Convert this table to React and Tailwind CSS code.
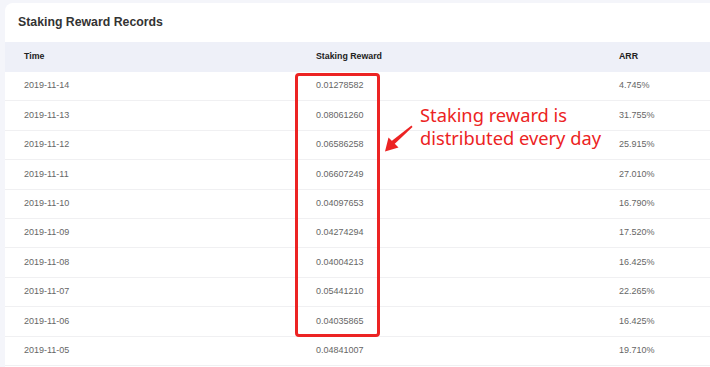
import React from "react";

const rows = [
  ["2019-11-14", "0.01278582", "4.745%"],
  ["2019-11-13", "0.08061260", "31.755%"],
  ["2019-11-12", "0.06586258", "25.915%"],
  ["2019-11-11", "0.06607249", "27.010%"],
  ["2019-11-10", "0.04097653", "16.790%"],
  ["2019-11-09", "0.04274294", "17.520%"],
  ["2019-11-08", "0.04004213", "16.425%"],
  ["2019-11-07", "0.05441210", "22.265%"],
  ["2019-11-06", "0.04035865", "16.425%"],
  ["2019-11-05", "0.04841007", "19.710%"],
];

function App() {
  return (
    <div className="relative h-[367px] overflow-hidden bg-[#f4f5fa] pl-[5px] pt-[3px] font-['Liberation_Sans',Arial,sans-serif]">
      {/* card */}
      <div className="h-full rounded-tl-lg bg-white">
        <div className="flex h-[39px] items-center pl-[13px]">
          <h1 className="text-[12.3px] font-bold text-[#333]">Staking Reward Records</h1>
        </div>

        {/* header */}
        <div className="grid h-[30px] grid-cols-[292px_303px_1fr] items-center bg-[#eef0f8] pl-[19px] text-[8.8px] font-bold text-[#222]">
          <div>Time</div>
          <div>Staking Reward</div>
          <div>ARR</div>
        </div>

        {/* rows */}
        {rows.map((r) => (
          <div
            key={r[0]}
            className="grid h-[29.4px] grid-cols-[292px_303px_1fr] items-center border-b border-[#f0f0f2] pl-[19px] text-[9px] text-[#666]"
          >
            <div>{r[0]}</div>
            <div>{r[1]}</div>
            <div>{r[2]}</div>
          </div>
        ))}
      </div>

      {/* annotation */}
      <div className="absolute left-[295px] top-[73px] h-[264px] w-[85px] rounded-[4px] border-[3px] border-[#ec2323]"></div>
      <svg className="absolute left-[380px] top-[120px]" width="36" height="36" viewBox="380 120 36 36">
        <polygon points="411.5,125.5 412.5,127 394,144.5 391,141.5" fill="#ec2323" />
        <polygon points="385,151.5 388.5,137.5 398.5,147.5" fill="#ec2323" />
      </svg>
      <div className="absolute left-[420px] top-[103px] text-[18.3px] leading-[23px] text-[#ec2323] font-['Noto_Sans',sans-serif]">
        <div>Staking reward is</div>
        <div>distributed every day</div>
      </div>
    </div>
  );
}

export default App;
